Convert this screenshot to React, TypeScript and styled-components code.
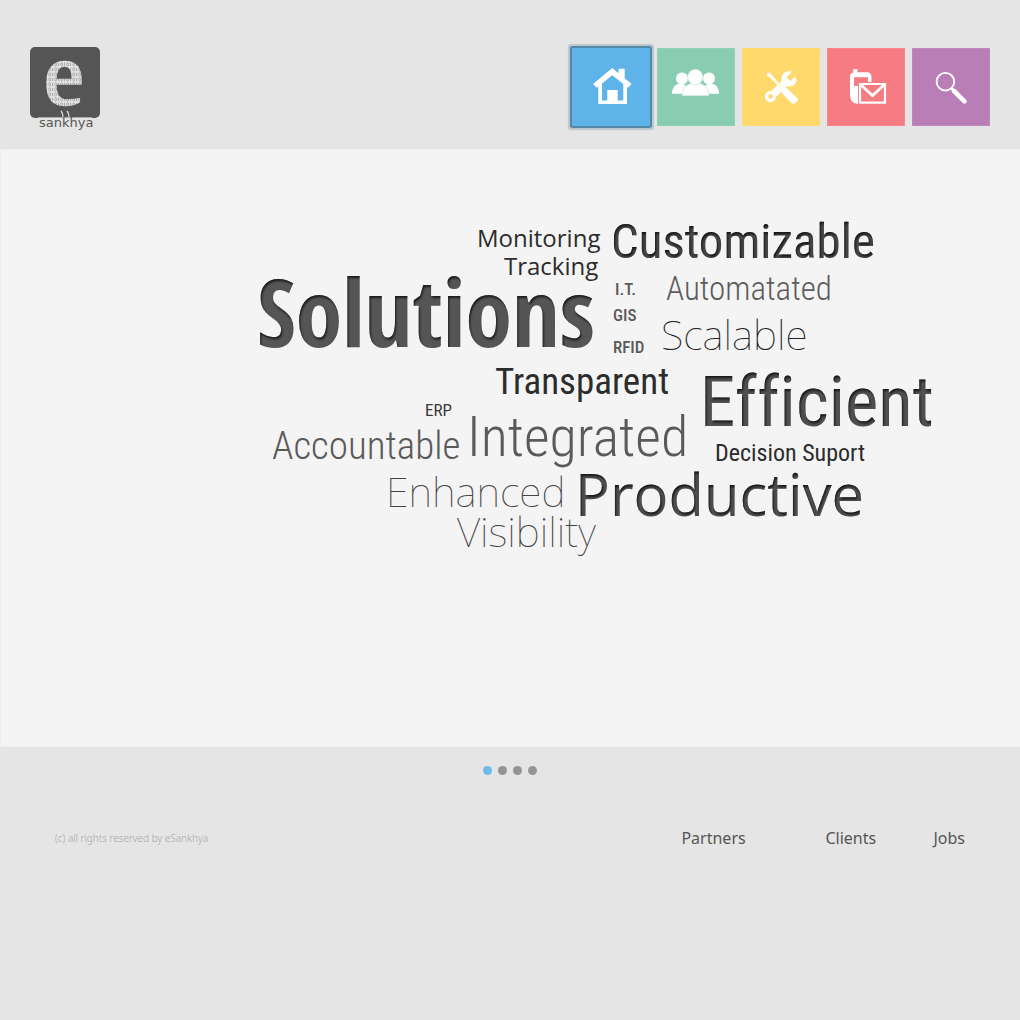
import React, { useState } from 'react';
import styled, { createGlobalStyle } from 'styled-components';

const condensed = '"Roboto Condensed", Roboto, "Liberation Sans", sans-serif';
const heavy = '"Open Sans Condensed", "Roboto Condensed", "Liberation Sans", sans-serif';
const open = '"Open Sans", "Noto Sans", sans-serif';
const noto = '"Noto Sans", "Open Sans", sans-serif';

const GlobalStyle = createGlobalStyle`
  *, *::before, *::after { box-sizing: border-box; }
  body { margin: 0; background: #e5e5e5; color: #555; font-family: ${noto}; }
`;

const Header = styled.header`
  display: flex;
  justify-content: space-between;
  align-items: flex-start;
  padding: 47px 30px 18px;
`;

const LogoLink = styled.a`
  display: block;
  svg { display: block; overflow: visible; }
`;

const MainNav = styled.nav`
  display: flex;
  gap: 7px;
  padding-top: 1px;
`;

const Tile = styled.a<{ $color: string; $active?: boolean }>`
  display: block;
  width: 78px;
  height: 78px;
  background: ${p => p.$color};
  box-shadow: ${p => (p.$active ? '0 0 0 2px #5488a8, 0 0 1px 4px #b9c6ce' : 'inset 0 0 0 1px rgba(255, 255, 255, 0.08)')};
  border-radius: ${p => (p.$active ? '1px' : '0')};
  svg { display: block; }
`;

const Stage = styled.main`
  display: flex;
  justify-content: flex-end;
  padding: 61px 85px 186px 24px;
  background: #f4f4f4;
  border-top: 1px solid #eeeeee;
  border-bottom: 1px solid #eeeeee;
  border-left: 1px solid #ececec;
`;

const Cloud = styled.ul`
  position: relative;
  flex: none;
  width: 680px;
  height: 349px;
  margin: 0;
  padding: 0;
  list-style: none;
`;

const Word = styled.li<{ $x: number; $y: number; $size: number; $weight: number; $font: string; $color: string; $inset?: boolean }>`
  position: absolute;
  left: ${p => p.$x}px;
  top: ${p => p.$y}px;
  font: ${p => p.$weight} ${p => p.$size}px/1 ${p => p.$font};
  font-variant-ligatures: none;
  color: ${p => p.$color};
  filter: ${p => (p.$inset ? 'url(#engrave)' : 'none')};
  white-space: nowrap;
`;

const Defs = styled.svg`
  position: absolute;
  width: 0;
  height: 0;
`;

const Pager = styled.div`
  display: flex;
  justify-content: center;
  gap: 6px;
  padding: 19px 0;
`;

const Dot = styled.button<{ $active: boolean }>`
  width: 9px;
  height: 9px;
  padding: 0;
  border: 0;
  border-radius: 50%;
  background: ${p => (p.$active ? '#6db9e8' : '#949494')};
  cursor: pointer;
`;

const Footer = styled.footer`
  display: flex;
  justify-content: space-between;
  align-items: center;
  padding: 32px 55px;
`;

const Copyright = styled.p`
  margin: 0;
  font: 300 10px/24px ${noto};
  color: #a6a6a6;
`;

const FooterNav = styled.nav`
  display: grid;
  grid-template-columns: 144px 108px auto;
`;

const FooterLink = styled.a`
  font: 400 16px/24px ${noto};
  color: #555;
  text-decoration: none;
`;

const words = [
  { text: 'Monitoring', x: 222, y: 15, size: 24, weight: 400, font: open, color: '#2c2c2c' },
  { text: 'Customizable', x: 356, y: 6, size: 49, weight: 400, font: condensed, color: '#484848', inset: true },
  { text: 'Tracking', x: 249, y: 43, size: 24, weight: 400, font: open, color: '#2c2c2c' },
  { text: 'Solutions', x: 2, y: 53, size: 94, weight: 700, font: heavy, color: '#555555', inset: true },
  { text: 'I.T.', x: 360, y: 70, size: 17, weight: 500, font: condensed, color: '#5a5a5a' },
  { text: 'Automatated', x: 411, y: 61, size: 33, weight: 300, font: condensed, color: '#5c5c5c' },
  { text: 'GIS', x: 358, y: 96, size: 17, weight: 500, font: condensed, color: '#5a5a5a' },
  { text: 'Scalable', x: 406, y: 103, size: 41, weight: 100, font: noto, color: '#222222' },
  { text: 'RFID', x: 358, y: 128, size: 17, weight: 500, font: condensed, color: '#5a5a5a' },
  { text: 'Transparent', x: 240, y: 152, size: 37, weight: 400, font: condensed, color: '#2c2c2c' },
  { text: 'Efficient', x: 445, y: 155, size: 71, weight: 400, font: condensed, color: '#505050', inset: true },
  { text: 'ERP', x: 170, y: 191, size: 17, weight: 400, font: condensed, color: '#3a3a3a' },
  { text: 'Integrated', x: 212, y: 198, size: 56, weight: 300, font: condensed, color: '#5a5a5a' },
  { text: 'Accountable', x: 17, y: 216, size: 39, weight: 300, font: condensed, color: '#5a5a5a' },
  { text: 'Decision Suport', x: 460, y: 230, size: 24, weight: 400, font: condensed, color: '#2c2c2c' },
  { text: 'Enhanced', x: 131, y: 260, size: 41, weight: 100, font: noto, color: '#444444' },
  { text: 'Productive', x: 320, y: 254, size: 58, weight: 500, font: open, color: '#505050', inset: true },
  { text: 'Visibility', x: 202, y: 300, size: 41, weight: 100, font: noto, color: '#444444' },
];

function Logo() {
  return (
    <svg width="70" height="84" viewBox="0 0 70 84" role="img" aria-label="eSankhya">
      <defs>
        <pattern id="bits" width="6" height="5" patternUnits="userSpaceOnUse">
          <rect width="6" height="5" fill="#e2e2e2" />
          <ellipse cx="1.7" cy="2.4" rx="1" ry="1.6" fill="none" stroke="#8c8c8c" strokeWidth="0.6" />
          <path d="M4.6 0.8V4" stroke="#8c8c8c" strokeWidth="0.7" />
        </pattern>
      </defs>
      <rect width="70" height="71" rx="5" fill="#555" />
      <text x="14" y="57" fontFamily='"Liberation Serif", serif' fontWeight="400" fontSize="89" fill="url(#bits)" stroke="url(#bits)" strokeWidth="2.5">e</text>
      <path d="M8 70.500H62" stroke="#aaa" strokeWidth="1" />
      <text x="9" y="80" fontFamily='"DejaVu Sans", sans-serif' fontSize="13" fill="#555">sankhya</text>
      <path d="M31 64Q33 66 33 70M37 64Q39 66 39 70" fill="none" stroke="#e5e5e5" strokeWidth="1.200" />
    </svg>
  );
}

function HomeIcon() {
  return (
    <svg width="78" height="78" viewBox="0 0 78 78" aria-hidden="true">
      <g fill="#fff">
        <path d="M40.300 20L46.500 25.200V20.700H52.700V30.300L59.700 36L56 39.700L40.300 27.300L24.700 39.700L21 36Z" />
        <path d="M26.300 38L30 35V52.500H35.300V42H45.700V52.500H51.300V35L55 38V56H26.300Z" />
      </g>
    </svg>
  );
}

function PeopleIcon() {
  return (
    <svg width="78" height="78" viewBox="0 0 78 78" aria-hidden="true">
      <g fill="#fff">
        <circle cx="25" cy="30.500" r="6" />
        <circle cx="52" cy="30.500" r="6" />
        <path d="M15 45.700C15 39 19 35 25 35.500L31 39V45.700Z" />
        <path d="M62 45.700C62 39 58 35 52 35.500L46 39V45.700Z" />
        <path d="M25 47.700C25.500 39.500 30 35 38.500 35S51.500 39.500 52 47.700Z" stroke="#b9e0d0" strokeWidth="0.600" />
        <circle cx="38.300" cy="29" r="7.700" stroke="#b9e0d0" strokeWidth="0.600" />
      </g>
    </svg>
  );
}

function ToolsIcon() {
  return (
    <svg width="78" height="78" viewBox="0 0 78 78" aria-hidden="true">
      <path d="M45.500 23.500C41 24 38.500 28.500 40 32.500L29 43.200C25.500 42.800 23 45.300 23 48.500A5.500 5.500 0 0 0 34 49L45 38.200C49.500 39.500 54 36.500 54.500 32L53 28.500L48.500 33L44.500 29L48.500 25.500L49.500 22.500Z" fill="#fff" />
      <circle cx="28.600" cy="48.400" r="2.400" fill="#ffd96b" />
      <path d="M25 25L28 24.500L30.500 28L42 40.500L40.500 42L28.500 30L25 28Z" fill="#fff" stroke="#ffe8a4" strokeWidth="0.500" />
      <path d="M39.500 42.500Q39 40.500 42 39.500L45 40L55.500 50.500Q56.500 52 55 53.500L53 55.300Q51 56.500 49.500 55L40 45.500Z" fill="#fff" />
    </svg>
  );
}

function ContactIcon() {
  return (
    <svg width="78" height="78" viewBox="0 0 78 78" aria-hidden="true">
      <path fillRule="evenodd" d="M26.300 21H30.300V24.300H40Q44.500 24.300 44.500 29V34H41V29.300H27V38H31V55.700H30Q23 55.700 23 46V29Q23 25 26.300 24.500Z" fill="#fff" />
      <path d="M33 36H58V54.700H33Z" fill="none" stroke="#fff" strokeWidth="2.200" />
      <path d="M34 37L45.500 47.500L57 37" fill="none" stroke="#fff" strokeWidth="2.800" />
    </svg>
  );
}

function SearchIcon() {
  return (
    <svg width="78" height="78" viewBox="0 0 78 78" aria-hidden="true">
      <circle cx="33.400" cy="33.700" r="8.800" fill="none" stroke="#fff" strokeWidth="1.900" />
      <path d="M39.500 40.500L42 43" stroke="#fff" strokeWidth="2.500" />
      <path d="M42 43L52.500 53.300" stroke="#fff" strokeWidth="4.600" strokeLinecap="round" />
    </svg>
  );
}

const tiles = [
  { name: 'Home', color: '#5eb4e9', Icon: HomeIcon },
  { name: 'About us', color: '#88cdb2', Icon: PeopleIcon },
  { name: 'Services', color: '#ffd96b', Icon: ToolsIcon },
  { name: 'Contact', color: '#f77b82', Icon: ContactIcon },
  { name: 'Search', color: '#b97eb5', Icon: SearchIcon },
];

export default function App() {
  const [slide, setSlide] = useState(0);
  return (
    <>
      <GlobalStyle />
      <Defs aria-hidden="true">
        <filter id="engrave" x="-5%" y="-5%" width="110%" height="110%" colorInterpolationFilters="sRGB">
          <feOffset in="SourceAlpha" dx="1" dy="2" result="moved" />
          <feGaussianBlur in="moved" stdDeviation="1.2" result="soft" />
          <feComposite in="SourceAlpha" in2="soft" operator="out" result="edge" />
          <feFlood floodColor="#000" floodOpacity="0.7" />
          <feComposite in2="edge" operator="in" result="shade" />
          <feMerge>
            <feMergeNode in="SourceGraphic" />
            <feMergeNode in="shade" />
          </feMerge>
        </filter>
      </Defs>
      <Header>
        <LogoLink href="#home"><Logo /></LogoLink>
        <MainNav aria-label="Main">
          {tiles.map(({ name, color, Icon }, i) => (
            <Tile key={name} href="#" aria-label={name} $color={color} $active={i === 0}><Icon /></Tile>
          ))}
        </MainNav>
      </Header>
      <Stage>
        <Cloud>
          {words.map(w => (
            <Word key={w.text} $x={w.x} $y={w.y} $size={w.size} $weight={w.weight} $font={w.font} $color={w.color} $inset={w.inset}>{w.text}</Word>
          ))}
        </Cloud>
      </Stage>
      <Pager>
        {[0, 1, 2, 3].map(n => (
          <Dot key={n} type="button" aria-label={`Slide ${n + 1}`} $active={n === slide} onClick={() => setSlide(n)} />
        ))}
      </Pager>
      <Footer>
        <Copyright>(c) all rights reserved by eSankhya</Copyright>
        <FooterNav aria-label="Footer">
          <FooterLink href="#partners">Partners</FooterLink>
          <FooterLink href="#clients">Clients</FooterLink>
          <FooterLink href="#jobs">Jobs</FooterLink>
        </FooterNav>
      </Footer>
    </>
  );
}
